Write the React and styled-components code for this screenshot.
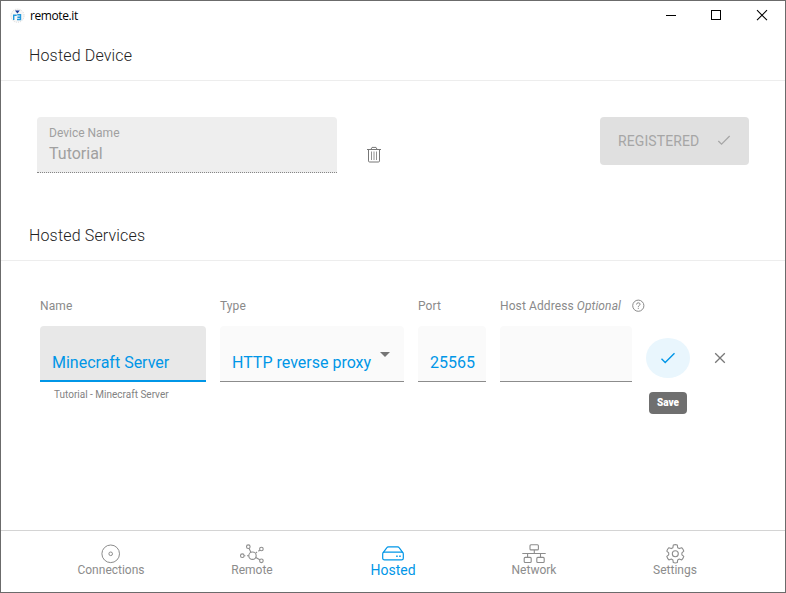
import React from 'react';
import styled, { createGlobalStyle } from 'styled-components';

const Global = createGlobalStyle`
  * { box-sizing: border-box; }
  body { margin: 0; background: #fff; font-family: Roboto, sans-serif; }
`;

const BLUE = '#0096e7';

const AppWindow = styled.div`
  width: 786px;
  height: 593px;
  display: flex;
  flex-direction: column;
  border: 1px solid #6b6b6b;
  background: #fff;
  overflow: hidden;
  white-space: nowrap;
`;

const TitleBar = styled.header`
  height: 29px;
  flex: none;
  display: flex;
  align-items: center;
  padding: 0 15px 0 8px;
`;

const TitleText = styled.span`
  flex: 1;
  margin-left: 5px;
  font: 12px 'Open Sans', sans-serif;
  letter-spacing: -0.4px;
  color: #000;
`;

const WindowControls = styled.div`
  display: flex;
  gap: 29px;
`;

const Icon = styled.svg`
  display: block;
  flex: none;
  fill: none;
  stroke: currentColor;
  overflow: visible;
`;

const SectionHeading = styled.h2`
  height: 51px;
  flex: none;
  margin: 0;
  padding-left: 28px;
  border-bottom: 1px solid #ededed;
  font-size: 16px;
  font-weight: 300;
  line-height: 51px;
  letter-spacing: 0.16px;
  color: #222;
`;

const DeviceRow = styled.section`
  height: 129px;
  flex: none;
  display: flex;
  align-items: flex-start;
  padding: 36px 36px 0;
`;

const DeviceField = styled.div`
  width: 300px;
  height: 56px;
  padding: 8px 12px 0;
  border-radius: 4px 4px 0 0;
  border-bottom: 1px dotted #858585;
  background: #eee;
  color: #a0a0a0;
`;

const DeviceLabel = styled.div`
  font-size: 12px;
  line-height: 16px;
`;

const DeviceValue = styled.div`
  font-size: 16px;
  line-height: 25px;
`;

const DeleteButton = styled.div`
  margin: 29px 0 0 30px;
  color: #777;
`;

const RegisteredButton = styled.div`
  width: 149px;
  height: 48px;
  margin-left: auto;
  padding: 0 18px 1px;
  display: flex;
  align-items: center;
  justify-content: space-between;
  border-radius: 4px;
  background: #e0e0e0;
  color: #a6a6a6;
  font-size: 14px;
  letter-spacing: 0.1px;
`;

const Services = styled.section`
  flex: 1;
  display: grid;
  grid-template-columns: 166px 184px 68px 132px 44px 32px;
  grid-template-rows: 16px 56px 22px;
  column-gap: 14px;
  row-gap: 12px;
  padding: 37px 0 0 39px;
`;

const ColumnLabel = styled.div`
  display: flex;
  align-items: center;
  font-size: 12px;
  letter-spacing: 0.1px;
  color: #8a8a8a;
`;

const Optional = styled.em`
  margin-left: 3px;
`;

const HelpMark = styled.span`
  width: 12px;
  height: 12px;
  margin-left: 11px;
  display: flex;
`;

const Field = styled.div`
  height: 56px;
  padding: 25px 12px 0;
  display: flex;
  justify-content: space-between;
  border-radius: 4px 4px 0 0;
  border-bottom: ${(p) => (p.$focused ? `2px solid ${BLUE}` : '1px solid #8c8c8c')};
  background: ${(p) => (p.$focused ? '#e8e8e8' : '#fafafa')};
  color: ${BLUE};
  font-size: 16px;
  line-height: 24px;
`;

const Caret = styled.span`
  margin: 1px 2px 0 0;
  width: 10px;
  height: 5px;
  background: #757575;
  clip-path: polygon(0 0, 100% 0, 50% 100%);
`;

const SaveButton = styled.div`
  width: 44px;
  height: 40px;
  margin-top: 12px;
  display: grid;
  place-items: center;
  border-radius: 50%;
  background: #e9f6fd;
  color: ${BLUE};
`;

const CancelButton = styled.div`
  height: 40px;
  margin-top: 12px;
  display: grid;
  place-items: center;
  color: #777;
`;

const Hint = styled.div`
  padding: 0 14px;
  margin-top: -5px;
  font-size: 10px;
  line-height: 12px;
  color: #828282;
`;

const Tooltip = styled.div`
  grid-column: 5;
  justify-self: center;
  width: 38px;
  height: 22px;
  margin-top: -2px;
  border-radius: 4px;
  background: #6f6f6f;
  color: #fff;
  font-size: 10px;
  font-weight: 900;
  line-height: 22px;
  text-align: center;
`;

const NavBar = styled.nav`
  height: 62px;
  flex: none;
  display: flex;
  justify-content: center;
  border-top: 1px solid #d4d4d4;
`;

const NavItem = styled.div`
  width: 141px;
  padding-top: 13px;
  display: flex;
  flex-direction: column;
  align-items: center;
  color: ${(p) => (p.$active ? BLUE : '#8c8c8c')};
  font-size: ${(p) => (p.$active ? '14px' : '12px')};
  line-height: 14px;
`;

const NavIcon = styled.div`
  height: 20px;
  margin-bottom: -1px;
  display: grid;
  place-items: center;
`;

function Logo() {
  return (
    <Icon width="16" height="16" viewBox="0 0 16 16">
      <circle cx="8.5" cy="7.7" r="6.6" fill="#f7f7f7" stroke="#d8d8d8" strokeDasharray="1 1.2" />
      <path d="M6 2.4h4.8L8.4 5.4z" fill="#173c9e" stroke="none" />
      <path d="M4.7 12V6.6M5.2 7.3h2.5M8.3 6.8h3.2v4.7H8M8.4 9.2h3" stroke="#2298dc" strokeWidth="1.4" />
    </Icon>
  );
}

function Check({ width = 16 }) {
  return (
    <Icon width={width} height={width * 0.75} viewBox="0 0 16 12" strokeWidth="1.4">
      <path d="M1.5 6.8l3.7 3.7L14.5 1.2" />
    </Icon>
  );
}

function Connections() {
  return (
    <Icon width="20" height="20" viewBox="0 0 20 20">
      <circle cx="9.7" cy="9.8" r="8.8" />
      <circle cx="9.7" cy="9.8" r="1.8" />
    </Icon>
  );
}

function Remote() {
  return (
    <Icon width="24" height="20" viewBox="0 0 24 20" strokeWidth="1.1">
      <circle cx="12.5" cy="11.7" r="3.7" />
      <circle cx="8.3" cy="2.7" r="1.8" />
      <circle cx="21.4" cy="5" r="1.8" />
      <circle cx="2.3" cy="11.7" r="1.8" />
      <circle cx="21.4" cy="16.8" r="1.8" />
      <path d="M9.1 4.5l1.8 3.8M19.8 6.2l-1.5 1M17 8l-1.2 1M4.2 11.7h1.2M7 11.7h1.7M15.8 13.6l4 2.2" />
    </Icon>
  );
}

function Hosted() {
  return (
    <Icon width="22" height="16" viewBox="0 0 22 16" strokeWidth="1.2">
      <rect x="0.7" y="6.1" width="20.6" height="7.8" rx="1.7" />
      <path d="M1.2 6.7L4.7 1.8Q5.3 .8 6.5 .8h9q1.2 0 1.8 1l3.5 4.9" />
      <path d="M14.2 10.2h1.5M17.2 10.2h1.5" strokeWidth="1.5" />
    </Icon>
  );
}

function Network() {
  return (
    <Icon width="24" height="20" viewBox="0 0 24 20" strokeWidth="1.1">
      <rect x="8" y="0.7" width="8.4" height="5.2" rx="1" />
      <rect x="2.2" y="13.4" width="7" height="5.1" rx="1" />
      <rect x="14.8" y="13.4" width="7.4" height="5.1" rx="1" />
      <path d="M.3 9.5h23.4M12.3 5.9v3.6M5.6 9.5v3.9M18.5 9.5v3.9" />
    </Icon>
  );
}

function Gear() {
  return (
    <Icon width="20" height="20" viewBox="0 0 20 20" strokeWidth="1.1" strokeLinejoin="round">
      <circle cx="10.3" cy="9.8" r="3" />
      <path transform="translate(.3 -.2)" d="M8 1.2Q10 .5 12 1.2L12.4 3.9 14 4.8 16.4 3.9Q17.9 5.3 18.5 7.4L16.6 9v2l1.9 1.6q-.6 2.1-2.1 3.5L14 15.2l-1.6.9-.4 2.7q-2 .7-4 0l-.4-2.7L6 15.2l-2.4.9q-1.5-1.4-2.1-3.5L3.4 11V9L1.5 7.4Q2.1 5.3 3.6 3.9L6 4.8l1.6-.9z" />
    </Icon>
  );
}

const NAV = [
  ['Connections', Connections],
  ['Remote', Remote],
  ['Hosted', Hosted],
  ['Network', Network],
  ['Settings', Gear],
];

export default function App() {
  return (
    <>
      <Global />
      <AppWindow>
        <TitleBar>
          <Logo />
          <TitleText>remote.it</TitleText>
          <WindowControls>
            <Icon width="16" height="16" shapeRendering="crispEdges"><path d="M2 7.5h10" stroke="#000" /></Icon>
            <Icon width="16" height="16" shapeRendering="crispEdges"><rect x="2.5" y="2.5" width="9" height="9" stroke="#000" /></Icon>
            <Icon width="16" height="16"><path d="M3 2.2l10 10M13 2.2l-10 10" stroke="#000" strokeWidth="1.1" /></Icon>
          </WindowControls>
        </TitleBar>

        <SectionHeading>Hosted Device</SectionHeading>
        <DeviceRow>
          <DeviceField>
            <DeviceLabel>Device Name</DeviceLabel>
            <DeviceValue>Tutorial</DeviceValue>
          </DeviceField>
          <DeleteButton>
            <Icon width="14" height="17" viewBox="0 0 14 17">
              <path d="M0 3.5h14M4 3.2L5 1.4h4l1 1.8M1.5 3.5v11.4q0 1.1 1.1 1.1h8.8q1.1 0 1.1-1.1V3.5" />
              <path d="M4.5 5.5v8.5M7 5.5v8.5M9.5 5.5v8.5" opacity=".8" />
            </Icon>
          </DeleteButton>
          <RegisteredButton>
            REGISTERED
            <Check width={14} />
          </RegisteredButton>
        </DeviceRow>

        <SectionHeading>Hosted Services</SectionHeading>
        <Services>
          <ColumnLabel>Name</ColumnLabel>
          <ColumnLabel>Type</ColumnLabel>
          <ColumnLabel>Port</ColumnLabel>
          <ColumnLabel>
            Host Address <Optional>Optional</Optional>
            <HelpMark>
              <Icon width="12" height="12" viewBox="0 0 12 12">
                <circle cx="6.3" cy="5.7" r="5.6" />
                <path d="M4.5 4.5Q4.6 2.8 6.3 2.8t1.8 1.4Q8.1 5 7.2 5.5 6.3 5.9 6.3 6.9M6.3 7.8v1.1" />
              </Icon>
            </HelpMark>
          </ColumnLabel>
          <span />
          <span />

          <Field $focused>Minecraft Server</Field>
          <Field>HTTP reverse proxy<Caret /></Field>
          <Field>25565</Field>
          <Field />
          <SaveButton><Check /></SaveButton>
          <CancelButton>
            <Icon width="12" height="12" strokeWidth="1.3"><path d="M1.2 1.2l9.6 9.6M10.8 1.2l-9.6 9.6" /></Icon>
          </CancelButton>

          <Hint>Tutorial - Minecraft Server</Hint>
          <Tooltip>Save</Tooltip>
        </Services>

        <NavBar>
          {NAV.map(([label, Glyph]) => (
            <NavItem key={label} $active={label === 'Hosted'}>
              <NavIcon><Glyph /></NavIcon>
              {label}
            </NavItem>
          ))}
        </NavBar>
      </AppWindow>
    </>
  );
}
